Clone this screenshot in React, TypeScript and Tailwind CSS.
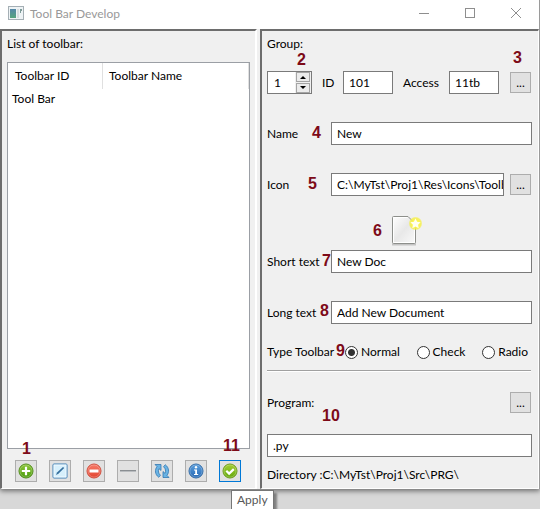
import { useState, type ReactNode } from "react";

const FIELD = "h-[23px] min-w-0 border border-[#7a7a7a] bg-white pl-[5px] text-black outline-none";

function Mark({ n, className }: { n: number; className: string }) {
  return (
    <span
      className={`pointer-events-none absolute font-['Liberation_Sans',Arial,sans-serif] text-base leading-4 font-bold text-[#7d0a18] ${className}`}
    >
      {n}
    </span>
  );
}

function BrowseButton({ label }: { label: string }) {
  return (
    <button
      aria-label={label}
      className="h-[21px] w-[21px] shrink-0 border border-[#adadad] bg-[#e1e1e1] text-center leading-4"
    >
      ...
    </button>
  );
}

function ToolButton({ label, active, children }: { label: string; active?: boolean; children: ReactNode }) {
  return (
    <button
      aria-label={label}
      className={`flex h-[22px] w-[22px] items-center justify-center border bg-[#e1e1e1] ${
        active ? "border-[#0078d7]" : "border-[#adadad]"
      }`}
    >
      {children}
    </button>
  );
}

function Disc({ from, to, edge, children }: { from: string; to: string; edge: string; children: ReactNode }) {
  const id = `disc-${from.slice(1)}`;
  return (
    <svg viewBox="0 0 16 16" className="h-4 w-4 shrink-0">
      <defs>
        <linearGradient id={id} x1="0" y1="0" x2="0" y2="1">
          <stop offset="0" stopColor={from} />
          <stop offset="1" stopColor={to} />
        </linearGradient>
      </defs>
      <circle cx="8" cy="8" r="7" fill={`url(#${id})`} stroke={edge} />
      <circle cx="8" cy="8" r="6.1" fill="none" stroke="#fff" strokeOpacity=".35" strokeWidth=".7" />
      {children}
    </svg>
  );
}

function Toolbar() {
  return (
    <div className="relative flex gap-3 pt-[11px] pl-2">
      <ToolButton label="Add">
        <Disc from="#8fc83c" to="#4a9a0c" edge="#4c8a12">
          <path d="M8 3.8v8.4M3.8 8h8.4" stroke="#fff" strokeWidth="2.2" />
        </Disc>
      </ToolButton>
      <ToolButton label="Edit">
        <svg viewBox="0 0 16 16" className="h-4 w-4 shrink-0">
          <rect x="1" y="1" width="14" height="14" rx="1" fill="#d7f0fc" stroke="#3b7fb5" />
          <rect x="2" y="2" width="12" height="12" fill="none" stroke="#fff" strokeOpacity=".7" />
          <path d="M4 12l1-2.5L11 4l1.2 1.1-5.8 5.7z" fill="#356f9e" />
        </svg>
      </ToolButton>
      <ToolButton label="Delete">
        <Disc from="#f77d6b" to="#e2432f" edge="#cf4938">
          <path d="M3.5 8h9" stroke="#fff" strokeWidth="3" />
        </Disc>
      </ToolButton>
      <ToolButton label="Separator">
        <svg viewBox="0 0 16 16" className="h-4 w-4 shrink-0">
          <path d="M0 7.5h16" stroke="#8a8e92" />
          <path d="M0 8.5h16" stroke="#b9bcbf" />
        </svg>
      </ToolButton>
      <ToolButton label="Refresh">
        <svg viewBox="0 0 16 16" className="h-4 w-4 shrink-0" fill="#69b3e4" stroke="#3377b0" strokeWidth=".8" strokeLinejoin="round">
          <path d="M1 1.5h6v6L5 5.6C3.9 7.7 4.3 10.4 6.5 12.3L4.7 14.3C.8 11.3.6 6.8 3 3.6z" />
          <path d="M15 14.5H9v-6l2 1.9c1.1-2.1.7-4.8-1.5-6.7l1.8-2c3.9 3 4.1 7.5 1.7 10.7z" />
        </svg>
      </ToolButton>
      <ToolButton label="Information">
        <Disc from="#5b9fdd" to="#2869b4" edge="#2e69a6">
          <circle cx="8" cy="4.3" r="1.2" fill="#fff" />
          <path d="M6 6.5h3v4.6h1.2v1H6v-1h1.2V7.5H6z" fill="#fff" />
        </Disc>
      </ToolButton>
      <ToolButton label="Apply" active>
        <Disc from="#a5cf35" to="#64a80a" edge="#6b9b16">
          <path d="M4.3 7.8l2.8 2.8 4.7-4.5" fill="none" stroke="#fff" strokeWidth="2.2" />
        </Disc>
      </ToolButton>
      <Mark n={1} className="-top-2 left-[15px]" />
      <Mark n={11} className="-top-[11px] left-[216px]" />
      <div
        role="tooltip"
        className="absolute top-[41px] left-[224px] h-5 border border-[#767676] bg-white px-[5px] leading-[18px] text-[#575757] shadow-[3px_3px_2px_rgba(0,0,0,0.4)]"
      >
        Apply
      </div>
    </div>
  );
}

function TitleBar() {
  return (
    <header className="flex h-[29px] items-start bg-white pl-2">
      <svg viewBox="0 0 16 14" className="mt-[6px] h-[14px] w-4">
        <defs>
          <linearGradient id="app" x1="0" y1="0" x2="0" y2="1">
            <stop offset="0" stopColor="#5487a8" />
            <stop offset="1" stopColor="#56a57d" />
          </linearGradient>
        </defs>
        <rect x=".5" y=".5" width="15" height="13" fill="#eef3f5" stroke="#a5afb5" />
        <rect x="2" y="3" width="6" height="9" fill="url(#app)" />
        <rect x="9" y="3" width="2" height="9" fill="#d7dddf" />
        <path d="M12 3h2v2h-1v2h-1z" fill="#7e9b98" />
      </svg>
      <h1 className="ml-[6px] flex-1 leading-[27px] text-[#999]">Tool Bar Develop</h1>
      <div className="flex text-[#8e8e8e]">
        <button aria-label="Minimize" className="flex h-[26px] w-[46px] items-center justify-center">
          <svg viewBox="0 0 10 10" className="h-[10px] w-[10px]" stroke="currentColor"><path d="M0 5.5h10" /></svg>
        </button>
        <button aria-label="Maximize" className="flex h-[26px] w-[46px] items-center justify-center">
          <svg viewBox="0 0 10 10" className="h-[10px] w-[10px]" stroke="currentColor" fill="none"><rect x=".5" y=".5" width="9" height="9" /></svg>
        </button>
        <button aria-label="Close" className="flex h-[26px] w-[46px] items-center justify-center">
          <svg viewBox="0 0 10 10" className="h-[10px] w-[10px]" stroke="currentColor"><path d="M0 0l10 10M10 0L0 10" /></svg>
        </button>
      </div>
    </header>
  );
}

function DocumentIcon() {
  return (
    <svg viewBox="0 0 32 32" className="h-8 w-8">
      <defs>
        <linearGradient id="paper" x1="0" y1="0" x2="1" y2="1">
          <stop offset="0" stopColor="#fff" />
          <stop offset=".5" stopColor="#e8e8e8" />
          <stop offset="1" stopColor="#fafafa" />
        </linearGradient>
        <radialGradient id="glow">
          <stop offset=".4" stopColor="#fff64a" />
          <stop offset=".8" stopColor="#f5ef45" stopOpacity=".8" />
          <stop offset="1" stopColor="#f5ef45" stopOpacity="0" />
        </radialGradient>
      </defs>
      <path d="M1 29.5h24" stroke="#000" strokeOpacity=".18" strokeWidth="2" />
      <path d="M2.500 1.500H17L24.500 9v18.500a1 1 0 0 1-1 1h-21a1 1 0 0 1-1-1v-25a1 1 0 0 1 1-1z" fill="url(#paper)" stroke="#8d8f8b" />
      <path d="M2.500 27.500v-25h14" fill="none" stroke="#fff" />
      <path d="M2.500 27.500h21v-18" fill="none" stroke="#fff" />
      <circle cx="24.500" cy="8.500" r="7" fill="url(#glow)" />
      <path d="M24.500 3.500l1.600 3.200 3.500.5-2.500 2.500.6 3.500-3.200-1.700-3.200 1.700.6-3.500-2.500-2.500 3.500-.5z" fill="#fffff0" />
    </svg>
  );
}

function ToolbarList() {
  return (
    <section className="flex w-[257px] shrink-0 flex-col border-t-2 border-r-2 border-b border-l-2 border-t-[#6d6d6d] border-r-white border-b-white border-l-[#6d6d6d] pr-[5px] pb-[6px] pl-[5px]">
      <h2 className="h-[31px] leading-[26px]">List of toolbar:</h2>
      <div className="h-[387px] border border-[#9b9fa5] bg-white">
        <table className="w-full table-fixed border-separate border-spacing-0 text-left">
          <thead>
            <tr className="h-[26px]">
              <th className="w-[95px] border-r border-[#e0e0e0] pl-[7px] font-normal">Toolbar ID</th>
              <th className="border-r border-[#e0e0e0] pl-[6px] font-normal">Toolbar Name</th>
            </tr>
          </thead>
          <tbody>
            <tr className="h-5">
              <td className="pl-1">Tool Bar</td>
              <td />
            </tr>
          </tbody>
        </table>
      </div>
      <Toolbar />
    </section>
  );
}

function Spinner() {
  const [value, setValue] = useState(1);
  const arrow = "flex h-[10px] w-[14px] items-center justify-center border border-[#a5a5a5] bg-[#ececec]";
  return (
    <div className="relative flex h-[23px] w-[45px] shrink-0 items-center border border-[#7a7a7a] bg-white">
      <input
        aria-label="Group"
        value={value}
        onChange={(e) => setValue(Number(e.target.value) || 0)}
        className="h-full min-w-0 flex-1 pl-[6px] outline-none"
      />
      <div className="flex h-full w-4 shrink-0 flex-col items-center justify-center gap-px bg-[#f0f0f0]">
        <button aria-label="Increase" className={arrow} onClick={() => setValue(value + 1)}>
          <svg viewBox="0 0 6 4" className="h-1 w-[6px]"><path d="M0 4l3-3 3 3z" /></svg>
        </button>
        <button aria-label="Decrease" className={arrow} onClick={() => setValue(value - 1)}>
          <svg viewBox="0 0 6 4" className="h-1 w-[6px]"><path d="M0 0l3 3 3-3z" /></svg>
        </button>
      </div>
      <Mark n={2} className="-top-5 left-[29px]" />
    </div>
  );
}

function TextRow({ id, label, value, mark, markClass, browse }: {
  id: string;
  label: string;
  value: string;
  mark: number;
  markClass: string;
  browse?: boolean;
}) {
  return (
    <div className="relative flex h-[23px] items-center">
      <label htmlFor={id} className="w-16 shrink-0">{label}</label>
      <input id={id} defaultValue={value} className={`flex-1 ${FIELD}`} />
      {browse && (
        <div className="ml-[6px] flex pr-px">
          <BrowseButton label="Browse for icon" />
        </div>
      )}
      <Mark n={mark} className={markClass} />
    </div>
  );
}

function Properties() {
  const [type, setType] = useState("Normal");
  return (
    <section className="min-w-0 flex-1 border-t-2 border-r border-b border-l-2 border-t-[#6d6d6d] border-r-white border-b-white border-l-[#6d6d6d] pr-[6px] pl-[5px]">
      <h2 className="h-10 leading-[26px]">Group:</h2>
      <div className="flex flex-col gap-7">
        <div className="relative flex items-center pr-px">
          <Spinner />
          <label htmlFor="item-id" className="ml-[10px] w-[21px]">ID</label>
          <input id="item-id" defaultValue="101" className={`w-[50px] ${FIELD}`} />
          <label htmlFor="access" className="ml-[10px] w-[46px]">Access</label>
          <input id="access" defaultValue="11tb" className={`w-[50px] ${FIELD}`} />
          <div className="ml-auto flex">
            <BrowseButton label="Browse for toolbar" />
          </div>
          <Mark n={3} className="-top-[21px] right-[10px]" />
        </div>
        <TextRow id="name" label="Name" value="New" mark={4} markClass="top-[3px] left-[45px]" />
        <TextRow id="icon" label="Icon" value="C:\MyTst\Proj1\Res\Icons\Toolbar\New.png" mark={5} markClass="top-[3px] left-[41px]" browse />
      </div>
      <div className="relative mt-[19px] mb-[3px] flex justify-center pl-[14px]">
        <DocumentIcon />
        <Mark n={6} className="top-2 left-[106px]" />
      </div>
      <div className="flex flex-col gap-7">
        <TextRow id="short" label="Short text" value="New Doc" mark={7} markClass="top-[3px] left-[55px]" />
        <TextRow id="long" label="Long text" value="Add New Document" mark={8} markClass="top-[2px] left-[53px]" />
      </div>
      <fieldset className="relative mt-[18px] flex h-5 items-center">
        <legend className="float-left w-[78px]">Type Toolbar</legend>
        <div className="flex flex-1 justify-between pr-1">
          {["Normal", "Check", "Radio"].map((option) => (
            <label key={option} className="flex items-center gap-[3px]">
              <input
                type="radio"
                name="type"
                checked={type === option}
                onChange={() => setType(option)}
                className="h-[13px] w-[13px] appearance-none rounded-full border border-[#333] bg-white checked:bg-[radial-gradient(circle,#333_3px,#fff_4px)]"
              />
              {option}
            </label>
          ))}
        </div>
        <Mark n={9} className="top-[1px] left-[69px]" />
      </fieldset>
      <hr className="mt-2 mr-px border-t border-[#a0a0a0] shadow-[0_1px_0_#fff]" />
      <div className="relative mt-[21px] flex items-center justify-between pr-px">
        <label htmlFor="program">Program:</label>
        <BrowseButton label="Browse for program" />
        <Mark n={10} className="top-4 left-[55px]" />
      </div>
      <input id="program" defaultValue=".py" className={`mt-[21px] w-full ${FIELD}`} />
      <p className="mt-2 leading-5">Directory :C:\MyTst\Proj1\Src\PRG\</p>
    </section>
  );
}

export default function App() {
  return (
    <div className="min-h-screen bg-[#d8d8d8] font-['Lato','Open_Sans',sans-serif] text-xs leading-4 text-black">
      <main className="border-r border-[#9a9a9a] bg-[#f0f0f0] shadow-[0_2px_5px_rgba(0,0,0,0.5)]">
        <TitleBar />
        <div className="flex gap-[3px]">
          <ToolbarList />
          <Properties />
        </div>
      </main>
    </div>
  );
}
